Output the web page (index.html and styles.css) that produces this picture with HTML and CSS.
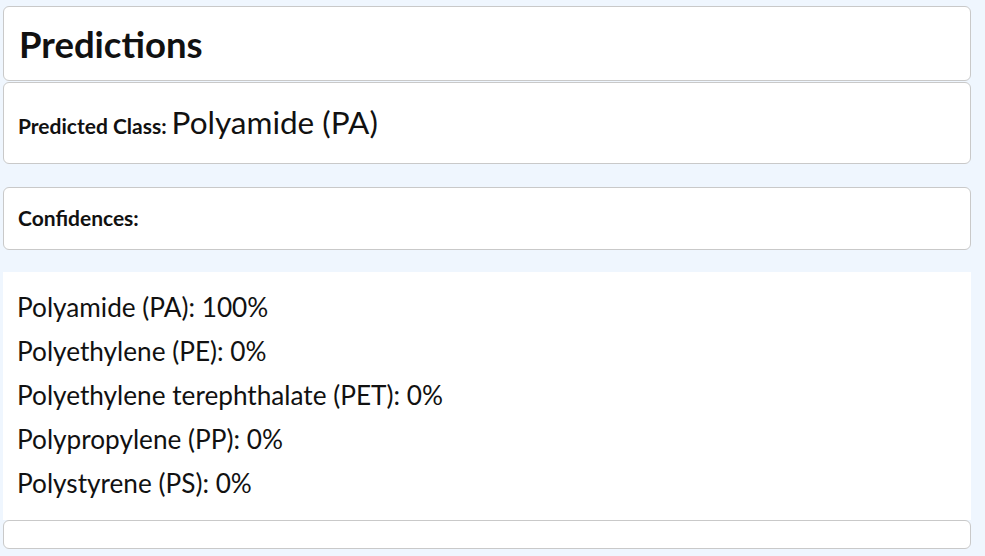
FILE: index.html
```html
<!DOCTYPE html>
<html>
<head>
<meta charset="utf-8">
<link rel="stylesheet" href="styles.css">
</head>
<body>
<div class="page">
  <div class="card title-card"><h1 class="title">Predictions</h1></div>
  <div class="card class-card"><span class="label">Predicted Class:</span> <span class="value">Polyamide (PA)</span></div>
  <div class="card conf-card"><span class="label">Confidences:</span></div>
  <div class="list">
    <div class="row">Polyamide (PA): 100%</div>
    <div class="row">Polyethylene (PE): 0%</div>
    <div class="row">Polyethylene terephthalate (PET): 0%</div>
    <div class="row">Polypropylene (PP): 0%</div>
    <div class="row">Polystyrene (PS): 0%</div>
  </div>
  <div class="card empty-card"></div>
</div>
</body>
</html>
```
FILE: styles.css
```css
html, body { margin: 0; padding: 0; }
body {
  background: #eff6fe;
  font-family: Lato, "Liberation Sans", sans-serif;
  color: #111;
  height: 556px;
  overflow: hidden;
}
.page {
  display: flex;
  flex-direction: column;
  padding: 6px 14px 0 3px;
}
.card {
  background: #fff;
  border: 1px solid #c9c9c9;
  border-radius: 6px;
  box-sizing: border-box;
}
.title-card {
  height: 75px;
  padding: 2px 15px 0;
  display: flex;
  align-items: center;
}
.title {
  margin: 0;
  font-size: 36.5px;
  font-weight: 700;
  line-height: 1;
}
.class-card {
  margin-top: 1px;
  height: 82px;
  padding: 24px 14px 0 14px;
  display: flex;
  align-items: baseline;
  gap: 5px;
}
.label { font-size: 21px; font-weight: 700; line-height: 1; }
.value { font-size: 31.5px; line-height: 1; }
.conf-card {
  margin-top: 23px;
  height: 63px;
  padding: 19px 14px 0 14px;
}
.list {
  margin-top: 22px;
  background: #fff;
  padding: 13px 14px 0 14px;
  height: 248px;
  box-sizing: border-box;
}
.row {
  font-size: 26.2px;
  line-height: 44px;
}
.empty-card { height: 29px; }
```
